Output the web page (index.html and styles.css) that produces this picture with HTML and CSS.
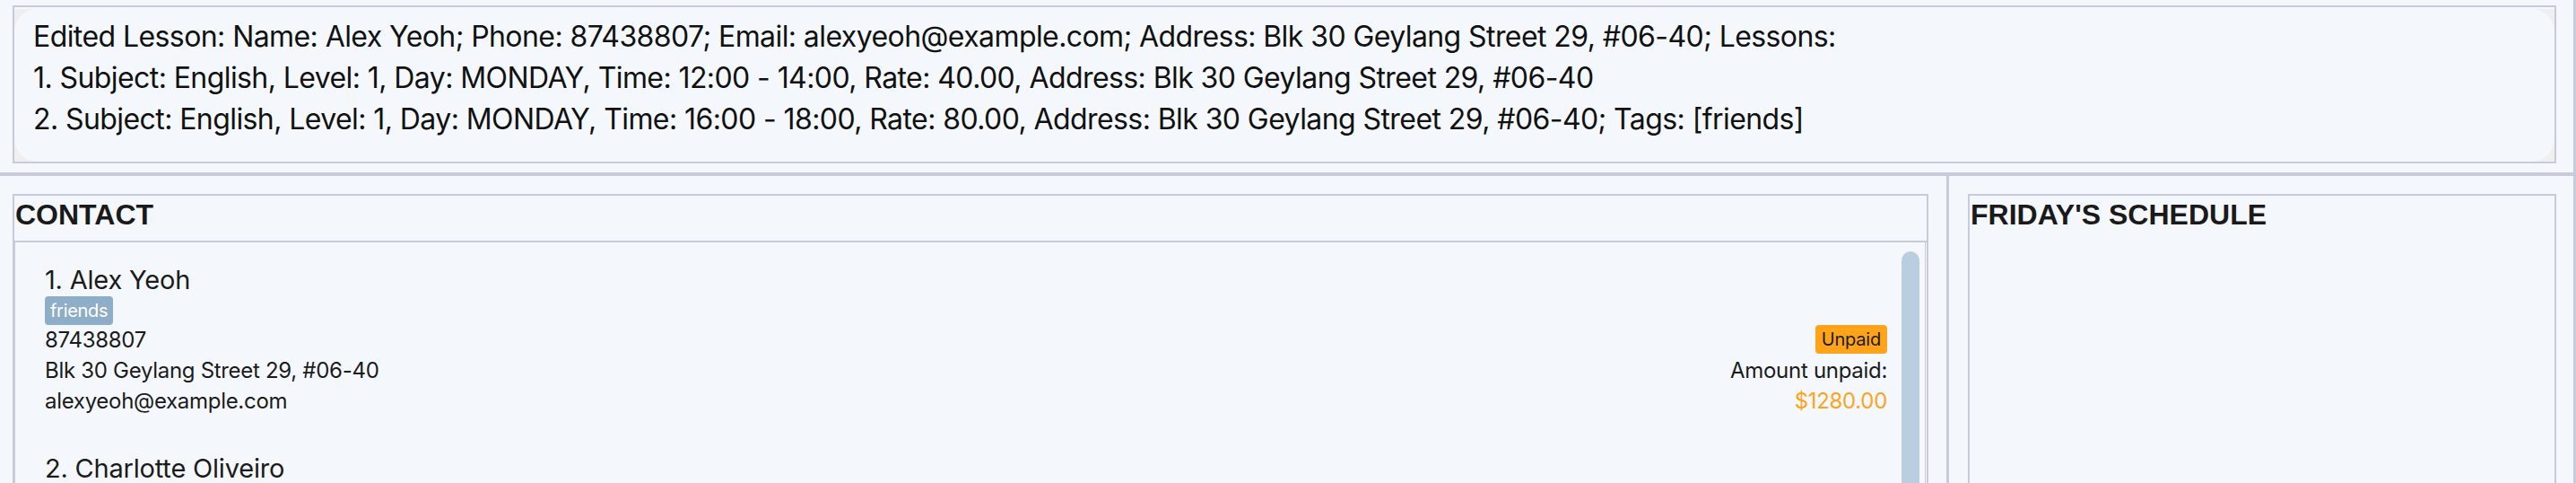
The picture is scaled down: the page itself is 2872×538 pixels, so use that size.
FILE: index.html
```html
<!DOCTYPE html>
<html lang="en">
<head>
<meta charset="utf-8">
<title>Tutor App</title>
<link rel="stylesheet" href="styles.css">
</head>
<body>
<div class="app">
  <section class="result-wrap">
    <div class="result-box">
      <div class="result-inner">
        <p class="result-text">Edited Lesson: Name: Alex Yeoh; Phone: 87438807; Email: alexyeoh@example.com; Address: Blk 30 Geylang Street 29, #06-40; Lessons:<br>1. Subject: English, Level: 1, Day: MONDAY, Time: 12:00 - 14:00, Rate: 40.00, Address: Blk 30 Geylang Street 29, #06-40<br>2. Subject: English, Level: 1, Day: MONDAY, Time: 16:00 - 18:00, Rate: 80.00, Address: Blk 30 Geylang Street 29, #06-40; Tags: [friends]</p>
      </div>
    </div>
  </section>
  <div class="hsep"></div>
  <main class="panes">
    <section class="left-pane">
      <div class="panel">
        <h2 class="panel-title with-rule">CONTACT</h2>
        <div class="list-box">
          <div class="cards">
            <article class="card">
              <div class="name">1. Alex Yeoh</div>
              <div class="tags"><span class="tag">friends</span></div>
              <div class="field">87438807</div>
              <div class="field right"><span class="badge">Unpaid</span></div>
              <div class="field">Blk 30 Geylang Street 29, #06-40</div>
              <div class="field right">Amount unpaid:</div>
              <div class="field">alexyeoh@example.com</div>
              <div class="field right amount">$1280.00</div>
            </article>
            <article class="card">
              <div class="name">2. Charlotte Oliveiro</div>
              <div class="tags"><span class="tag">neighbours</span></div>
              <div class="field">93210283</div>
              <div class="field right"><span class="badge">Unpaid</span></div>
              <div class="field">Blk 30 Lorong 3 Serangoon Gardens, #07-18</div>
              <div class="field right">Amount unpaid:</div>
              <div class="field">charlotte@example.com</div>
              <div class="field right amount">$400.00</div>
            </article>
          </div>
          <div class="scroll-track"><div class="scroll-thumb"></div></div>
        </div>
      </div>
    </section>
    <div class="vsep"></div>
    <section class="right-pane">
      <div class="panel">
        <h2 class="panel-title">FRIDAY'S SCHEDULE</h2>
      </div>
    </section>
  </main>
</div>
</body>
</html>
```
FILE: styles.css
```css
html, body {
  margin: 0;
  padding: 0;
  height: 538px;
  overflow: hidden;
  background: #f4f8fc;
}

.app {
  height: 538px;
  overflow: hidden;
  box-sizing: border-box;
  border-right: 3px solid #c8cbd9;
  display: flex;
  flex-direction: column;
  font-family: Inter, "Noto Sans", sans-serif;
  color: #1b1b1b;
}

/* ---------- result display ---------- */
.result-wrap {
  padding: 6px 19px 0 14px;
}

.result-box {
  height: 176px;
  box-sizing: border-box;
  border: 2px solid #c8cbd9;
  padding-top: 2px;
  background: #f4f8fc;
}

.result-inner {
  height: 100%;
  background: #efeff1;
}

.result-text {
  margin: 0;
  height: 100%;
  box-sizing: border-box;
  padding: 8px 20px 0 21px;
  background: #f4f8fc;
  border-radius: 26px;
  font-size: 32px;
  line-height: 46px;
  letter-spacing: -0.58px;
  color: #111;
  white-space: nowrap;
}

.hsep {
  margin-top: 10px;
  height: 4px;
  background: #c8cbd9;
  flex: none;
}

/* ---------- panes ---------- */
.panes {
  flex: 1;
  display: flex;
  min-height: 0;
}

.left-pane {
  width: 2170px;
  flex: none;
  box-sizing: border-box;
  padding: 20px 20px 0 14px;
}

.vsep {
  width: 3px;
  flex: none;
  background: #c8cbd9;
}

.right-pane {
  flex: 1;
  box-sizing: border-box;
  padding: 20px 19px 0 21px;
}

.panel {
  height: 420px;
  box-sizing: border-box;
  border: 2px solid #c8cbd9;
  display: flex;
  flex-direction: column;
}

.panel-title {
  margin: 0;
  padding: 3px 0 10px 1px;
  font-family: "Liberation Sans", Arial, sans-serif;
  font-weight: 700;
  font-size: 32px;
  line-height: 37px;
  color: #1a1a1a;
}

.with-rule {
  border-bottom: 2px solid #c8cbd9;
}

/* ---------- contact list ---------- */
.list-box {
  flex: 1;
  display: flex;
  border-left: 1px solid #c8cbd9;
  border-right: 1px solid #c8cbd9;
  margin-right: 1px;
  min-height: 0;
}

.cards {
  flex: 1;
  padding-top: 4px;
}

.card {
  display: grid;
  grid-template-columns: 1fr auto;
  padding: 20px 0 20px 33px;
}

.name {
  grid-column: 1 / -1;
  font-size: 29px;
  line-height: 35px;
  letter-spacing: -0.2px;
}

.tags {
  grid-column: 1 / -1;
  margin-top: 1px;
  display: flex;
  gap: 8px;
}

.tag {
  height: 32px;
  padding: 0 6px;
  border-radius: 4px;
  background: #8eadc6;
  color: #ffffff;
  font-size: 20px;
  line-height: 32px;
  letter-spacing: -0.3px;
}

.field {
  font-size: 24px;
  line-height: 34px;
  height: 34px;
  letter-spacing: -0.3px;
}

.right {
  text-align: right;
}

.badge {
  display: inline-block;
  height: 32px;
  padding: 0 7px;
  border-radius: 4px;
  background: #ffa31a;
  color: #1b1b1b;
  font-size: 20px;
  line-height: 32px;
  letter-spacing: -0.2px;
  vertical-align: top;
}

.amount {
  color: #ffa31a;
}

.scroll-track {
  width: 20px;
  flex: none;
  margin: 10px 6px 0 16px;
}

.scroll-thumb {
  height: 400px;
  border-radius: 10px;
  background: #b9cfdf;
}
```
